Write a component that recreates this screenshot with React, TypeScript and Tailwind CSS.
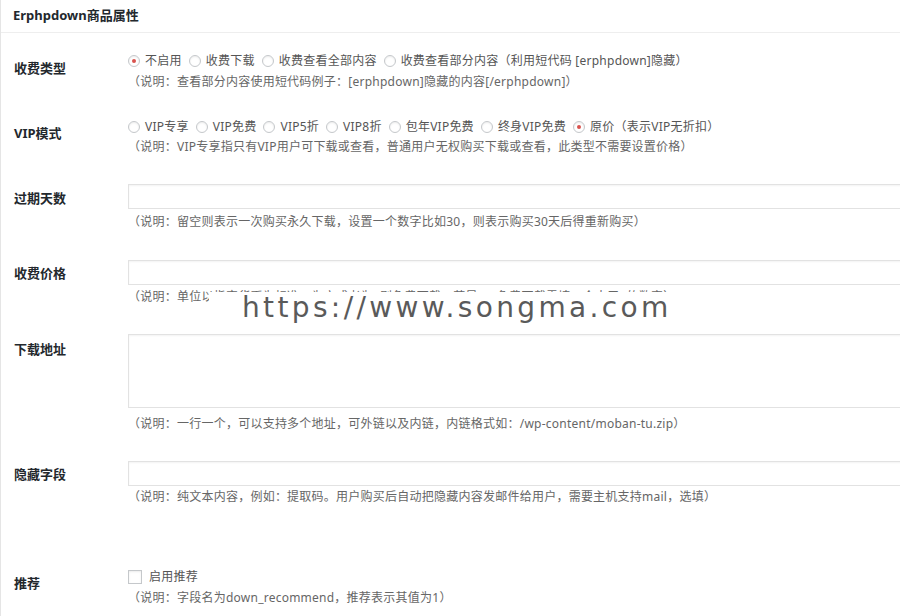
import React from "react";

const font = { fontFamily: '"Noto Sans", "Noto Sans CJK SC", sans-serif' };

function Radio({ label, checked }: { label: string; checked?: boolean }) {
  return (
    <label className="flex items-center mr-[7px]">
      <span className="w-[12px] h-[12px] rounded-full border border-[#c5c8cb] bg-white shadow-[inset_0_1px_2px_rgba(0,0,0,0.08)] flex items-center justify-center mr-[5px]">
        {checked && <span className="w-[4px] h-[4px] rounded-full bg-[#d9534f]" />}
      </span>
      <span>{label}</span>
    </label>
  );
}

function Label({ text, pt }: { text: string; pt: string }) {
  return <div className={`w-[127px] shrink-0 pl-[13px] text-[13px] leading-[20px] font-bold text-[#23282d] ${pt}`}>{text}</div>;
}

const desc = "text-[12px] leading-[20px] tracking-[0.02em] text-[#666] whitespace-nowrap";
const input = "block w-[800px] bg-white border border-[#e2e2e2] shadow-[inset_0_1px_2px_rgba(0,0,0,0.05)]";
const opts = "text-[12px] leading-[20px] tracking-[0.02em] text-[#555]";

export default function App() {
  return (
    <div className="relative w-[900px] h-[616px] overflow-hidden bg-white border-l border-[#e5e5e5]" style={font}>
      {/* 标题 */}
      <div className="h-[33px] border-b border-[#eee] pl-[12px] flex items-center text-[13px] font-bold text-[#23282d]">
        Erphpdown商品属性
      </div>

      {/* 收费类型 */}
      <div className="flex mt-[18px]">
        <Label text="收费类型" pt="pt-[7px]" />
        <div className={opts}>
          <div className="flex">
            <Radio label="不启用" checked />
            <Radio label="收费下载" />
            <Radio label="收费查看全部内容" />
            <Radio label="收费查看部分内容（利用短代码 [erphpdown]隐藏）" />
          </div>
          <div className={`${desc} mt-[1px]`}>（说明：查看部分内容使用短代码例子：[erphpdown]隐藏的内容[/erphpdown]）</div>
        </div>
      </div>

      {/* VIP模式 */}
      <div className="flex mt-[25px]">
        <Label text="VIP模式" pt="pt-[6px]" />
        <div className={opts}>
          <div className="flex">
            <Radio label="VIP专享" />
            <Radio label="VIP免费" />
            <Radio label="VIP5折" />
            <Radio label="VIP8折" />
            <Radio label="包年VIP免费" />
            <Radio label="终身VIP免费" />
            <Radio label="原价（表示VIP无折扣）" checked />
          </div>
          <div className={desc}>（说明：VIP专享指只有VIP用户可下载或查看，普通用户无权购买下载或查看，此类型不需要设置价格）</div>
        </div>
      </div>

      {/* 过期天数 */}
      <div className="flex mt-[27px]">
        <Label text="过期天数" pt="pt-[4px]" />
        <div>
          <div className={`${input} h-[25px]`} />
          <div className={`${desc} mt-[3px]`}>（说明：留空则表示一次购买永久下载，设置一个数字比如30，则表示购买30天后得重新购买）</div>
        </div>
      </div>

      {/* 收费价格 */}
      <div className="flex mt-[28px]">
        <Label text="收费价格" pt="pt-[3px]" />
        <div>
          <div className={`${input} h-[25px]`} />
          <div className={`${desc} mt-[2px]`}>（说明：单位以指定货币为标准，为空或者为0则免费下载，若是VIP免费下载需填一个大于0的数字）</div>
        </div>
      </div>

      {/* 下载地址 */}
      <div className="flex mt-[27px]">
        <Label text="下载地址" pt="pt-[5px]" />
        <div>
          <div className={`${input} h-[74px]`} />
          <div className={`${desc} mt-[6px]`}>（说明：一行一个，可以支持多个地址，可外链以及内链，内链格式如：/wp-content/moban-tu.zip）</div>
        </div>
      </div>

      {/* 隐藏字段 */}
      <div className="flex mt-[27px]">
        <Label text="隐藏字段" pt="pt-[3px]" />
        <div>
          <div className={`${input} h-[25px]`} />
          <div className={`${desc} mt-[1px]`}>（说明：纯文本内容，例如：提取码。用户购买后自动把隐藏内容发邮件给用户，需要主机支持mail，选填）</div>
        </div>
      </div>

      {/* 推荐 */}
      <div className="flex mt-[60px]">
        <Label text="推荐" pt="pt-[6px]" />
        <div className={opts}>
          <label className="flex items-center">
            <span className="w-[14px] h-[14px] border border-[#c5c8cb] bg-white shadow-[inset_0_1px_2px_rgba(0,0,0,0.08)] mr-[7px]" />
            <span>启用推荐</span>
          </label>
          <div className={`${desc} mt-[1px]`}>（说明：字段名为down_recommend，推荐表示其值为1）</div>
        </div>
      </div>

      {/* 水印 */}
      <div className="absolute left-[208px] top-[292px] w-[472px] h-[32px] bg-white flex items-center pl-[33px]">
        <span className="text-[28px] leading-none tracking-[0.12em] text-[#5a5a5a]" style={{ fontFamily: '"DejaVu Sans", sans-serif' }}>
          https://www.songma.com
        </span>
      </div>
    </div>
  );
}
